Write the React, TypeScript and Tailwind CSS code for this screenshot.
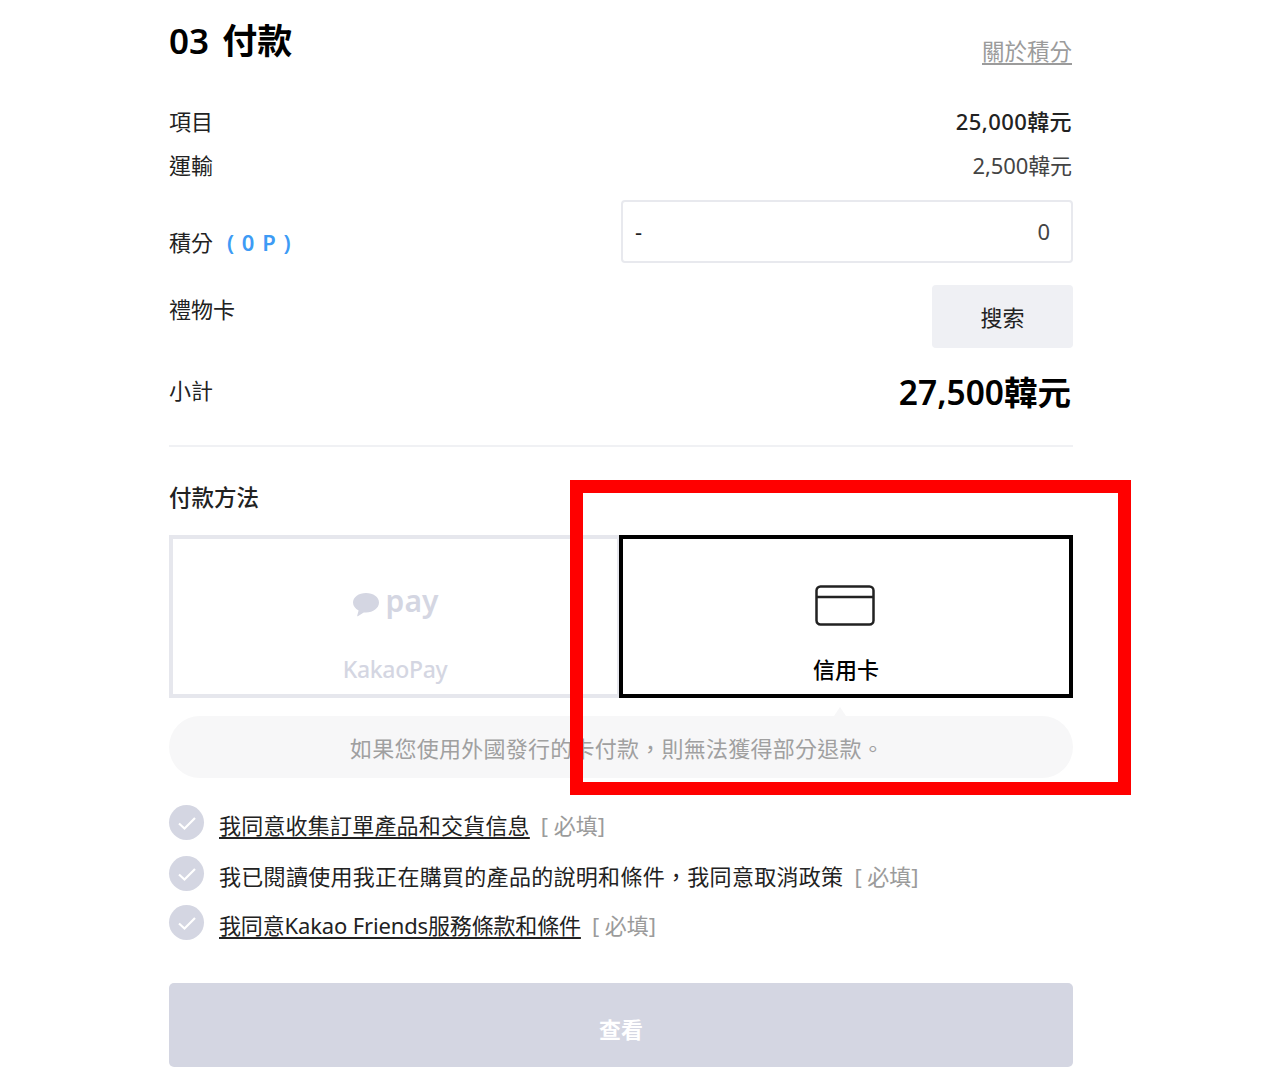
import React from 'react';

const FONT = "font-['Noto_Sans','Noto_Sans_CJK_TC',sans-serif]";

const Row: React.FC<{ className?: string; children: React.ReactNode }> = ({ className = '', children }) => (
  <div className={`flex items-center justify-between ${className}`}>{children}</div>
);

const CheckItem: React.FC<{ text: string; underline?: boolean; className?: string; textClass?: string }> = ({ text, underline, className = '', textClass = '' }) => (
  <div className={`flex items-center gap-[15px] ${className}`}>
    <span className="flex h-[35px] w-[35px] shrink-0 items-center justify-center rounded-full bg-[#d4d6e2]">
      <svg width="20" height="16" viewBox="0 0 20 16" fill="none">
        <path d="M2 8.5L7.5 13.5L18 3" stroke="#ffffff" strokeWidth="2.2" />
      </svg>
    </span>
    <span className="relative top-[2px] text-[22px] leading-[30px] whitespace-nowrap text-[#222222]">
      <span className={`${textClass} ${underline ? 'underline underline-offset-[3px]' : ''}`}>{text}</span>
      <span className="ml-[11px] text-[#9b9b9b]">[ 必填]</span>
    </span>
  </div>
);

export default function App() {
  return (
    <div className={`relative h-[1079px] overflow-hidden bg-white ${FONT}`}>
      <div className="ml-[169px] w-[904px] text-[#222222]">
        <Row className="h-[84px] items-start">
          <h2 className="mt-[17px] text-[35px] leading-[48px] font-semibold [word-spacing:4px] text-black">03 付款</h2>
          <a className="mt-[37px] pr-[1px] text-[22.5px] leading-[30px] text-[#9b9b9b] underline underline-offset-[3px]">關於積分</a>
        </Row>

        <Row className="mt-[19px] h-[36px] text-[22px]">
          <span>項目</span>
          <span className="pr-[1px] font-medium tracking-[0.4px]">25,000韓元</span>
        </Row>
        <Row className="mt-[8px] h-[36px] text-[22px]">
          <span>運輸</span>
          <span className="pr-[1px] tracking-[-0.1px] text-[#444444]">2,500韓元</span>
        </Row>

        <Row className="mt-[17px] h-[63px] text-[22px]">
          <span className="mt-[21px]">
            積分<span className="ml-[14px] font-semibold tracking-[1px] text-[#3d9bf5]">( 0 P )</span>
          </span>
          <div className="flex h-[63px] w-[452px] items-center justify-between rounded-[4px] border-2 border-[#e8e9ee] pr-[21px] pl-[12px]">
            <span>-</span>
            <span className="text-[#444444]">0</span>
          </div>
        </Row>

        <Row className="mt-[22px] h-[63px] items-start text-[22px]">
          <span className="mt-[8px]">禮物卡</span>
          <button className="flex h-[63px] w-[141px] items-center justify-center rounded-[4px] bg-[#eff0f4] pt-[2px]">搜索</button>
        </Row>

        <Row className="mt-[20px] h-[46px]">
          <span className="-mt-[2px] text-[22px]">小計</span>
          <span className="mt-[2px] pr-[2px] text-[33.5px] font-semibold text-black">27,500韓元</span>
        </Row>

        <div className="mt-[31px] h-[2px] bg-[#f0f1f4]" />

        <h3 className="mt-[33px] text-[22.5px] leading-[36px] font-medium">付款方法</h3>

        <div className="mt-[19px] flex">
          <div className="flex h-[163px] w-[452px] flex-col items-center border-4 border-[#e6e7ed] text-[#d4d6e2]">
            <div className="mt-[41px] flex h-[48px] items-center gap-[6px]">
              <svg width="28" height="28" viewBox="0 0 28 28" fill="#d4d6e2">
                <path d="M14 3C6.8 3 1 7.2 1 12.6c0 3.3 2.3 6.2 5.6 8l-1.4 5.2c-.1.4.3.7.6.5l6-3.9c.7.1 1.4.1 2.2.1 7.2 0 13-4.3 13-9.9S21.2 3 14 3z" />
              </svg>
              <span className="relative -top-[3px] text-[30px] leading-[40px] font-semibold">pay</span>
            </div>
            <span className="mt-[24px] text-[23px] leading-[34px] font-medium tracking-[-0.3px]">KakaoPay</span>
          </div>
          <div className="-ml-[2px] flex h-[163px] w-[454px] flex-col items-center border-4 border-black">
            <svg className="mt-[46px] -ml-[2px]" width="60" height="41" viewBox="0 0 60 41" fill="none">
              <rect x="1.5" y="1.5" width="57" height="38" rx="4" stroke="#222222" strokeWidth="2.5" />
              <path d="M1.5 12H58.5" stroke="#222222" strokeWidth="2.5" />
            </svg>
            <span className="mt-[26px] text-[22px] leading-[34px] font-medium text-black">信用卡</span>
          </div>
        </div>

        <div className="relative mt-[18px] flex h-[62px] items-center justify-center rounded-[31px] bg-[#f7f7f8] pt-[2px] pr-[8px] text-[22px] tracking-[0.25px] text-[#a0a0a0]">
          <span className="absolute -top-[9px] left-[665px] h-0 w-0 border-x-[6px] border-b-[9px] border-x-transparent border-b-[#f7f7f8]" />
          如果您使用外國發行的卡付款，則無法獲得部分退款。
        </div>

        <CheckItem className="mt-[27px]" textClass="tracking-[0.2px]" text="我同意收集訂單產品和交貨信息" underline />
        <CheckItem className="mt-[16px]" textClass="tracking-[0.3px]" text="我已閱讀使用我正在購買的產品的說明和條件，我同意取消政策" />
        <CheckItem className="mt-[14px]" textClass="tracking-[-0.15px]" text="我同意Kakao Friends服務條款和條件" underline />

        <button className="mt-[43px] flex h-[84px] w-full items-center justify-center rounded-[5px] bg-[#d4d6e2] pt-[9px] text-[22px] font-bold text-white">
          查看
        </button>
      </div>

      <div className="pointer-events-none absolute top-[480px] left-[570px] h-[315px] w-[561px] border-[13px] border-[#ff0000]" />
    </div>
  );
}
